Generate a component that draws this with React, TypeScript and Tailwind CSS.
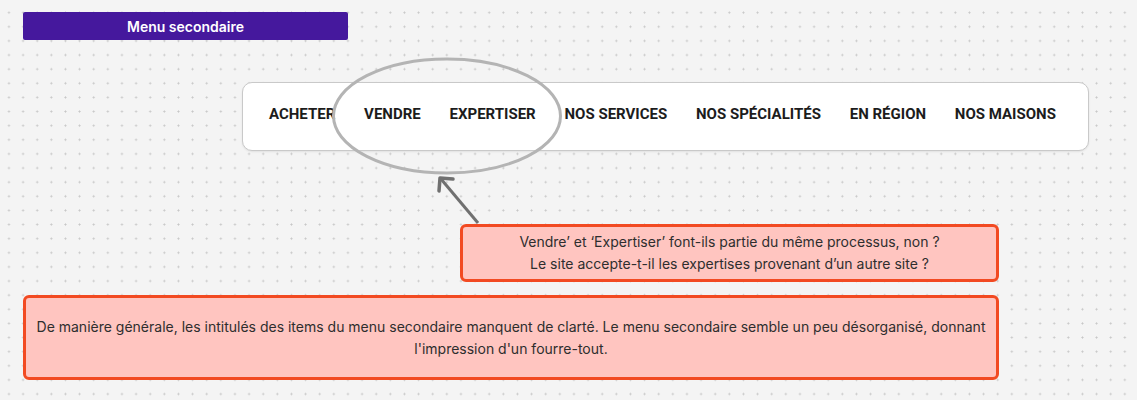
const navItems = ["ACHETER", "VENDRE", "EXPERTISER", "NOS SERVICES", "NOS SPÉCIALITÉS", "EN RÉGION", "NOS MAISONS"]

const App = () => {
    return (
        <main className="relative w-full h-[400px] overflow-hidden bg-[#f4f4f4] bg-[radial-gradient(circle,#c6c6c6_0.8px,transparent_1.2px)] bg-[size:14.14px_14.14px] bg-[position:1.9px_5.6px] font-['Inter',sans-serif]">
            <div className="ml-[23px] pt-[12px]">
                <div className="w-[325px] h-[28px] rounded-[2px] bg-[#45189d] flex items-center justify-center text-white text-[14px] font-semibold">
                    Menu secondaire
                </div>
            </div>

            <nav className="ml-[242px] mt-[42px] w-[847px] h-[69px] rounded-[10px] border border-[#c9c9c9] bg-white flex items-start gap-[28.8px] pl-[26px] pt-[20px] shadow-[0_1px_2px_rgba(0,0,0,0.08)] font-['Roboto',sans-serif] font-bold text-[15px] leading-[22px] text-[#1c1c1c]">
                {navItems.map((item) => (
                    <span key={item}>{item}</span>
                ))}
            </nav>

            <div className="ml-[460px] mt-[73px] w-[539px] h-[58px] rounded-[6px] border-[3px] border-[#f24a22] bg-[#ffc5c0] flex items-center justify-center text-center text-[14px] leading-[22px] text-[#2e2e2e]">
                <p>
                    Vendre’ et ‘Expertiser’ font-ils partie du même processus, non ?
                    <br />
                    Le site accepte-t-il les expertises provenant d’un autre site ?
                </p>
            </div>

            <div className="ml-[23px] mt-[13px] w-[976px] h-[85px] rounded-[6px] border-[3px] border-[#f24a22] bg-[#ffc5c0] flex items-center justify-center text-center text-[14px] leading-[22px] text-[#2e2e2e]">
                <p>
                    De manière générale, les intitulés des items du menu secondaire manquent de clarté. Le menu secondaire semble un peu désorganisé, donnant
                    <br />
                    l'impression d'un fourre-tout.
                </p>
            </div>

            {/* annotations drawn over the nav */}
            <svg className="absolute inset-0 pointer-events-none" width="1137" height="400" viewBox="0 0 1137 400">
                <ellipse cx="447" cy="116" rx="113.5" ry="57" fill="none" stroke="#b4b4b4" strokeWidth="3" />
                <path d="M478 223 L441 179" stroke="#707070" strokeWidth="3" fill="none" />
                <path d="M453 179 L440 178 L439 191" stroke="#707070" strokeWidth="3.5" fill="none" strokeLinecap="round" strokeLinejoin="round" />
            </svg>
        </main>
    )
}

export default App
